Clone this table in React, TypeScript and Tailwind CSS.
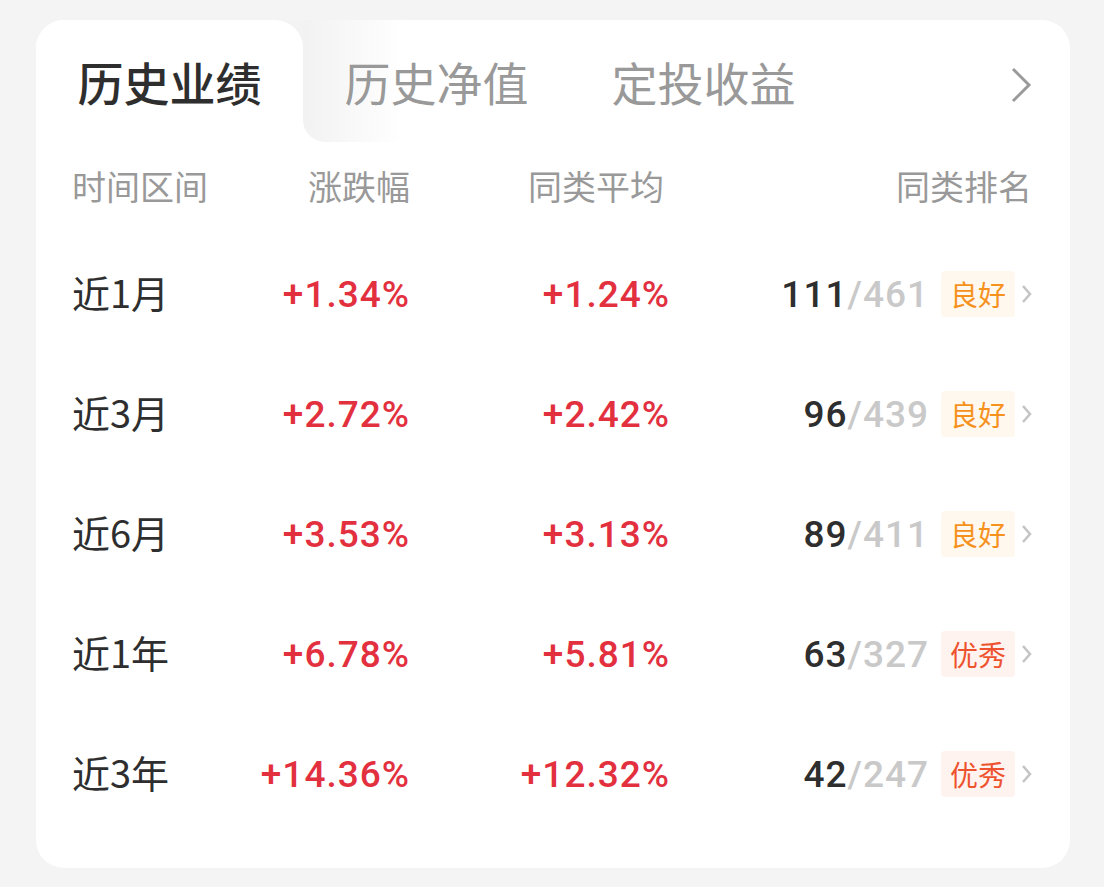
import React from 'react';

type Row = {
  period: string;
  change: string;
  avg: string;
  rank: string;
  total: string;
  level: 'good' | 'great';
};

const rows: Row[] = [
  { period: '近1月', change: '+1.34%', avg: '+1.24%', rank: '111', total: '461', level: 'good' },
  { period: '近3月', change: '+2.72%', avg: '+2.42%', rank: '96', total: '439', level: 'good' },
  { period: '近6月', change: '+3.53%', avg: '+3.13%', rank: '89', total: '411', level: 'good' },
  { period: '近1年', change: '+6.78%', avg: '+5.81%', rank: '63', total: '327', level: 'great' },
  { period: '近3年', change: '+14.36%', avg: '+12.32%', rank: '42', total: '247', level: 'great' },
];

const cjk = "font-['Noto_Sans_CJK_SC',sans-serif]";
const num = "font-['Roboto','Noto_Sans_CJK_SC',sans-serif]";

const tabs = ['历史业绩', '历史净值', '定投收益'];

const App: React.FC = () => {
  return (
    <div className={`min-h-screen bg-[#f4f4f4] pt-5 px-9 ${cjk}`}>
      <div className="w-[1034px] h-[848px] bg-white rounded-[28px] overflow-hidden">
        {/* Tab bar */}
        <div className="relative flex h-[120px]">
          {/* faded gray strip behind inactive tabs */}
          <div className="absolute left-[240px] top-0 w-[40px] h-[40px] bg-[#f3f3f3]" />
          <div className="absolute left-[267px] top-0 w-[100px] h-[122px] rounded-bl-[22px] bg-gradient-to-r from-[#f2f2f2] to-white" />

          {tabs.map((t, i) => (
            <div
              key={t}
              className={`relative flex items-center justify-center w-[267px] h-full pt-[2px] text-[46px] ${
                i === 0
                  ? 'bg-white rounded-tr-[28px] text-[#2e2e2e] font-medium'
                  : 'text-[#999999]'
              }`}
            >
              {t}
            </div>
          ))}
          <div className="relative flex-1 flex items-center justify-end pr-[38px] pt-[10px]">
            <svg width="22" height="36" viewBox="0 0 22 36" fill="none">
              <path d="M3 2l16 16L3 34" stroke="#9a9a9a" strokeWidth="3" />
            </svg>
          </div>
        </div>

        {/* Table */}
        <div className="pl-9 pr-[38px]">
          <div className="grid grid-cols-[140px_198px_260px_1fr] h-[96px] items-center pb-[4px] text-[34px] leading-none text-[#999999]">
            <span>时间区间</span>
            <span className="text-right">涨跌幅</span>
            <span className="text-right pr-[6px]">同类平均</span>
            <span className="text-right">同类排名</span>
          </div>

          {rows.map((r) => (
            <div
              key={r.period}
              className="grid grid-cols-[140px_198px_260px_1fr] h-[120px] items-center"
            >
              <span className="pb-[9px] text-[38px] leading-none text-[#2e2e2e]">{r.period}</span>
              <span className={`pb-[4px] text-right text-[37px] leading-none tracking-[1px] font-medium text-[#e3303f] ${num}`}>
                {r.change}
              </span>
              <span className={`pb-[4px] text-right text-[37px] leading-none tracking-[1px] font-medium text-[#e3303f] ${num}`}>
                {r.avg}
              </span>
              <div className="flex items-center justify-end pb-[4px]">
                <span className={`text-[37px] leading-none tracking-[1px] font-medium ${num}`}>
                  <span className="text-[#2e2e2e]">{r.rank}</span>
                  <span className="text-[#c9c9c9]">/{r.total}</span>
                </span>
                <span
                  className={`ml-[12px] h-[46px] px-[9px] flex items-center rounded-[4px] text-[28px] ${
                    r.level === 'good'
                      ? 'bg-[#fff8ee] text-[#f5921e]'
                      : 'bg-[#fff3ef] text-[#ee5330]'
                  }`}
                >
                  {r.level === 'good' ? '良好' : '优秀'}
                </span>
                <svg className="ml-[6px]" width="11" height="20" viewBox="0 0 11 20" fill="none">
                  <path d="M2 2l7 8-7 8" stroke="#c4c4c4" strokeWidth="2.5" />
                </svg>
              </div>
            </div>
          ))}
        </div>
      </div>
    </div>
  );
};

export default App;
